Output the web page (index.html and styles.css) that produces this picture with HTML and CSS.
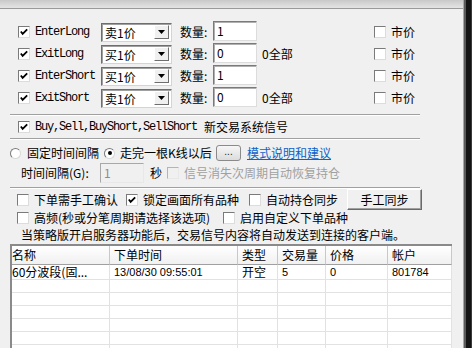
FILE: index.html
```html
<html lang="zh">
  <head>
    <meta charset="UTF-8" />
    <meta name="viewport" content="width=device-width, initial-scale=1.0" />
    <title>交易信号</title>
    <link rel="stylesheet" href="styles.css">
  </head>
  <body>
    <div class="screen">
      <div class="dlg">
        <div class="cap"></div>

        <div class="orders">
          <div class="orow">
            <span class="cb on"><svg viewBox="0 0 11 11"><polyline points="2,5 4,7.5 9,2.5" /></svg></span>
            <span class="mono name">EnterLong</span>
            <div class="sel"><span class="sel-text">卖1价</span><span class="sel-btn"><svg viewBox="0 0 7 4"><polygon points="0,0 7,0 3.5,4" /></svg></span></div>
            <span class="qty">数量:</span>
            <div class="edit">1</div>
            <span class="all"></span>
            <span class="cb"></span><span class="mkt">市价</span>
          </div>
          <div class="orow">
            <span class="cb on"><svg viewBox="0 0 11 11"><polyline points="2,5 4,7.5 9,2.5" /></svg></span>
            <span class="mono name">ExitLong</span>
            <div class="sel"><span class="sel-text">买1价</span><span class="sel-btn"><svg viewBox="0 0 7 4"><polygon points="0,0 7,0 3.5,4" /></svg></span></div>
            <span class="qty">数量:</span>
            <div class="edit">0</div>
            <span class="all">0全部</span>
            <span class="cb"></span><span class="mkt">市价</span>
          </div>
          <div class="orow">
            <span class="cb on"><svg viewBox="0 0 11 11"><polyline points="2,5 4,7.5 9,2.5" /></svg></span>
            <span class="mono name">EnterShort</span>
            <div class="sel"><span class="sel-text">买1价</span><span class="sel-btn"><svg viewBox="0 0 7 4"><polygon points="0,0 7,0 3.5,4" /></svg></span></div>
            <span class="qty">数量:</span>
            <div class="edit">1</div>
            <span class="all"></span>
            <span class="cb"></span><span class="mkt">市价</span>
          </div>
          <div class="orow">
            <span class="cb on"><svg viewBox="0 0 11 11"><polyline points="2,5 4,7.5 9,2.5" /></svg></span>
            <span class="mono name">ExitShort</span>
            <div class="sel"><span class="sel-text">卖1价</span><span class="sel-btn"><svg viewBox="0 0 7 4"><polygon points="0,0 7,0 3.5,4" /></svg></span></div>
            <span class="qty">数量:</span>
            <div class="edit">0</div>
            <span class="all">0全部</span>
            <span class="cb"></span><span class="mkt">市价</span>
          </div>
        </div>

        <div class="sep sep1"></div>

        <div class="sysrow">
          <span class="cb on"><svg viewBox="0 0 11 11"><polyline points="2,5 4,7.5 9,2.5" /></svg></span>
          <span class="mono sysname">Buy,Sell,BuyShort,SellShort</span>
          <span>新交易系统信号</span>
        </div>

        <div class="sep sep2"></div>

        <div class="moderow">
          <span class="radio"></span>
          <span class="mode1">固定时间间隔</span>
          <span class="radio on"><i></i></span>
          <span class="mode2">走完一根K线以后</span>
          <span class="dots">...</span>
          <a class="link" href="#">模式说明和建议</a>
        </div>

        <div class="timerow">
          <span class="tlabel">时间间隔(G):</span>
          <div class="edit off">1</div>
          <span class="sec">秒</span>
          <span class="cb off"></span>
          <span class="dim">信号消失次周期自动恢复持仓</span>
        </div>

        <div class="sep sep3"></div>

        <div class="optrow first">
          <span class="cb"></span><span class="opt w1">下单需手工确认</span>
          <span class="cb on"><svg viewBox="0 0 11 11"><polyline points="2,5 4,7.5 9,2.5" /></svg></span><span class="opt w2">锁定画面所有品种</span>
          <span class="cb"></span><span class="opt w3">自动持仓同步</span>
          <span class="btn">手工同步</span>
        </div>
        <div class="optrow second">
          <span class="cb"></span><span class="opt w4">高频(秒或分笔周期请选择该选项)</span>
          <span class="cb"></span><span class="opt">启用自定义下单品种</span>
        </div>

        <div class="note">当策略版开启服务器功能后，交易信号内容将自动发送到连接的客户端。</div>

        <div class="list">
          <div class="lrow head">
            <span>名称</span><span>下单时间</span><span>类型</span><span>交易量</span><span>价格</span><span>帐户</span>
          </div>
          <div class="lrow data">
            <span>60分波段(固...</span><span class="num">13/08/30 09:55:01</span><span>开空</span><span class="num">5</span><span class="num">0</span><span class="num">801784</span>
          </div>
          <div class="lrow"><span></span><span></span><span></span><span></span><span></span><span></span></div>
          <div class="lrow"><span></span><span></span><span></span><span></span><span></span><span></span></div>
          <div class="lrow"><span></span><span></span><span></span><span></span><span></span><span></span></div>
          <div class="lrow"><span></span><span></span><span></span><span></span><span></span><span></span></div>
          <div class="lrow"><span></span><span></span><span></span><span></span><span></span><span></span></div>
          <div class="lrow"><span></span><span></span><span></span><span></span><span></span><span></span></div>
        </div>
      </div>
      <div class="edge"></div>
    </div>
  </body>
</html>
```

FILE: styles.css
```css
* {
  margin: 0;
  padding: 0;
  box-sizing: border-box;
}
body {
  width: 472px;
  height: 348px;
  overflow: hidden;
  font-family: "Noto Sans CJK SC", "Liberation Sans", sans-serif;
  font-size: 12px;
  line-height: 1;
  color: #000000;
  background: #111111;
}
.screen {
  display: flex;
  height: 348px;
}
.dlg {
  width: 464px;
  height: 348px;
  background: #f0f0f0;
  border-right: 1px solid #a8a8a8;
  overflow: hidden;
}
.edge {
  width: 8px;
  height: 348px;
  background: #141414;
  border-left: 2px solid #5a5a5a;
  border-right: 1px solid #3a3a3a;
}
.cap {
  height: 9px;
  background: linear-gradient(#c9c9c9, #e4e4e4);
  border-bottom: 1px solid #9a9a9a;
}
.mono {
  font-family: "Liberation Mono", monospace;
  font-size: 12px;
  letter-spacing: -1.2px;
  white-space: nowrap;
}
span {
  white-space: nowrap;
  flex: none;
}

/* checkbox / radio */
.cb {
  width: 12px;
  height: 12px;
  background: #ffffff;
  border: 1px solid;
  border-color: #7a7a7a #dcdcdc #dcdcdc #7a7a7a;
  display: flex;
  align-items: center;
  justify-content: center;
}
.cb svg {
  width: 10px;
  height: 10px;
}
.cb polyline {
  fill: none;
  stroke: #000000;
  stroke-width: 2;
}
.cb.off {
  background: #f0f0f0;
  border-color: #b4b4b4 #e8e8e8 #e8e8e8 #b4b4b4;
}
.radio {
  width: 11px;
  height: 11px;
  border-radius: 50%;
  background: #ffffff;
  border: 1px solid;
  border-color: #7a7a7a #d8d8d8 #d8d8d8 #7a7a7a;
  display: flex;
  align-items: center;
  justify-content: center;
}
.radio i {
  width: 4px;
  height: 4px;
  border-radius: 50%;
  background: #000000;
}

/* order rows */
.orders {
  padding-top: 12px;
}
.orow {
  height: 22px;
  display: flex;
  align-items: center;
  padding-left: 18px;
}
.name {
  width: 71px;
  padding-left: 5px;
}
.sel {
  width: 71px;
  height: 19px;
  flex: none;
  background: #ffffff;
  border: 1px solid;
  border-color: #6e6e6e #d4d4d4 #d4d4d4 #6e6e6e;
  box-shadow: inset 1px 1px 0 #a0a0a0;
  display: flex;
  align-items: center;
  justify-content: space-between;
  padding: 1px 2px 1px 3px;
}
.sel-text {
  padding-top: 1px;
}
.sel-btn {
  width: 15px;
  height: 14px;
  background: #f0f0f0;
  border: 1px solid;
  border-color: #ffffff #6e6e6e #6e6e6e #ffffff;
  display: flex;
  align-items: center;
  justify-content: center;
}
.sel-btn svg {
  width: 7px;
  height: 4px;
}
.qty {
  width: 33px;
  margin-left: 8px;
}
.edit {
  width: 44px;
  height: 20px;
  flex: none;
  background: #ffffff;
  border: 1px solid;
  border-color: #7a7a7a #dcdcdc #dcdcdc #7a7a7a;
  box-shadow: inset 1px 1px 0 #b0b0b0;
  padding: 3px 0 0 3px;
}
.orow .edit {
  margin-top: -3px;
}
.all {
  width: 117px;
  padding-left: 5px;
}
.mkt {
  padding-left: 5px;
}

/* separators */
.sep {
  width: 410px;
  height: 2px;
  margin-left: 10px;
  border-top: 1px solid #a0a0a0;
  border-bottom: 1px solid #ffffff;
}
.sep1 {
  margin-top: 5px;
}
.sep2 {
  margin-top: 1px;
}
.sep3 {
  margin-top: 4px;
}

.sysrow {
  height: 20px;
  margin-top: 1px;
  display: flex;
  align-items: center;
  padding-left: 18px;
}
.sysname {
  padding-left: 5px;
  margin-right: 7px;
}

/* mode */
.moderow {
  height: 18px;
  margin-top: 4px;
  display: flex;
  align-items: center;
  padding-left: 10px;
}
.mode1 {
  width: 83px;
  padding-left: 6px;
}
.mode2 {
  width: 101px;
  padding-left: 5px;
}
.dots {
  width: 25px;
  height: 16px;
  border: 1px solid #8a8a8a;
  border-radius: 3px;
  background: linear-gradient(#f6f6f6, #dcdcdc);
  font-family: "Liberation Sans", sans-serif;
  font-size: 10px;
  text-align: center;
  line-height: 12px;
  color: #222222;
}
.link {
  margin-left: 6px;
  color: #0b62c8;
  text-decoration: underline;
  white-space: nowrap;
}

.timerow {
  height: 21px;
  display: flex;
  align-items: center;
  padding-left: 21px;
}
.tlabel {
  width: 79px;
}
.edit.off {
  background: #f0f0f0;
  color: #8c8c8c;
  border-color: #a8a8a8 #e8e8e8 #e8e8e8 #a8a8a8;
  box-shadow: none;
}
.sec {
  width: 23px;
  padding-left: 6px;
}
.dim {
  color: #a0a0a0;
  padding-left: 5px;
}

/* options */
.optrow {
  display: flex;
  align-items: center;
  padding-left: 17px;
}
.optrow.first {
  height: 19px;
  margin-top: 1px;
}
.optrow.second {
  height: 17px;
}
.opt {
  padding-left: 5px;
}
.w1 {
  width: 97px;
}
.w2 {
  width: 111px;
}
.w3 {
  width: 86px;
}
.w4 {
  width: 194px;
}
.btn {
  width: 75px;
  height: 21px;
  flex: none;
  background: #f0f0f0;
  border: 1px solid;
  border-color: #ffffff #6a6a6a #6a6a6a #ffffff;
  box-shadow: inset -1px -1px 0 #a0a0a0;
  display: flex;
  align-items: center;
  justify-content: center;
}
.note {
  height: 18px;
  padding-left: 21px;
  display: flex;
  align-items: center;
  white-space: nowrap;
}

/* list */
.list {
  margin-left: 10px;
  width: 442px;
  border-left: 2px solid #8a8a8a;
  border-top: 2px solid #8a8a8a;
  background: #ffffff;
  height: 120px;
}
.lrow {
  display: grid;
  grid-template-columns: 98px 128px 40px 48px 62px 64px;
  height: 13px;
}
.lrow span {
  border-right: 1px solid #e2e2e2;
  border-bottom: 1px solid #e2e2e2;
  padding-left: 4px;
  display: flex;
  align-items: center;
  line-height: 12px;
}
.lrow span:first-child {
  padding-left: 0;
}
.lrow.head {
  height: 19px;
  background: linear-gradient(#ffffff, #f0f0f0);
}
.lrow.head span {
  border-right: 1px solid #c8c8c8;
  border-bottom: 1px solid #a0a0a0;
}
.lrow.data {
  height: 15px;
}
.num {
  font-family: "Liberation Sans", sans-serif;
  font-size: 11px;
}
```
